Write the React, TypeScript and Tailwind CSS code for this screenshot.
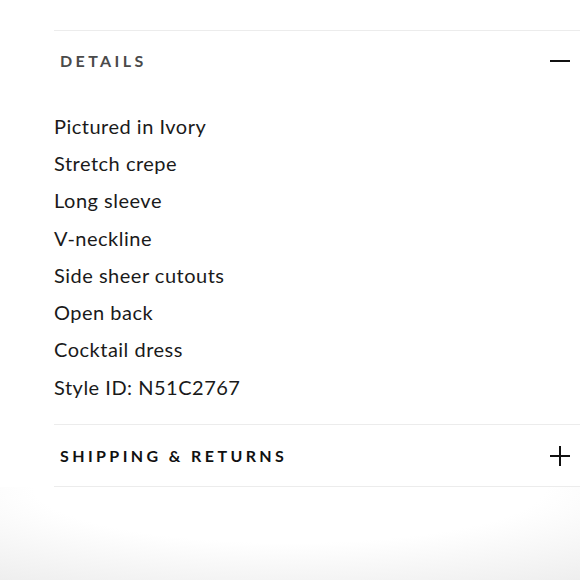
import React from "react";

const items = [
  "Pictured in Ivory",
  "Stretch crepe",
  "Long sleeve",
  "V-neckline",
  "Side sheer cutouts",
  "Open back",
  "Cocktail dress",
  "Style ID: N51C2767",
];

export default function App() {
  return (
    <div className="w-[580px] h-[580px] bg-white overflow-hidden flex flex-col" style={{ fontFamily: '"Lato", sans-serif' }}>
      <div className="pt-[30px] pl-[54px]">
        <div className="border-t border-[#ececec]">
          <div className="h-[60px] flex items-center justify-between pl-[6px] pr-[10px]">
            <span className="text-[16px] font-bold tracking-[3.4px] text-[#4a4a4a]">DETAILS</span>
            <span className="w-[20px] h-[2px] bg-[#111]" />
          </div>
          <ul className="pt-[16px] pb-[19px]">
            {items.map((t) => (
              <li key={t} className="h-[37.3px] flex items-center text-[20px] text-[#1a1a1a] tracking-[0.5px]">
                {t}
              </li>
            ))}
          </ul>
        </div>
        <div className="border-t border-[#ececec] border-b">
          <div className="h-[61px] flex items-center justify-between pl-[6px] pr-[9px]">
            <span className="text-[16px] font-bold tracking-[3.4px] text-[#111]">SHIPPING &amp; RETURNS</span>
            <svg width="22" height="22" viewBox="0 0 22 22">
              <path d="M11 1V21M1 11H21" stroke="#111" strokeWidth="2" />
            </svg>
          </div>
        </div>
      </div>
      <div className="flex-1 bg-[radial-gradient(ellipse_110%_150%_at_50%_0%,#ffffff_40%,#e6e6e6_100%)]" />
    </div>
  );
}
